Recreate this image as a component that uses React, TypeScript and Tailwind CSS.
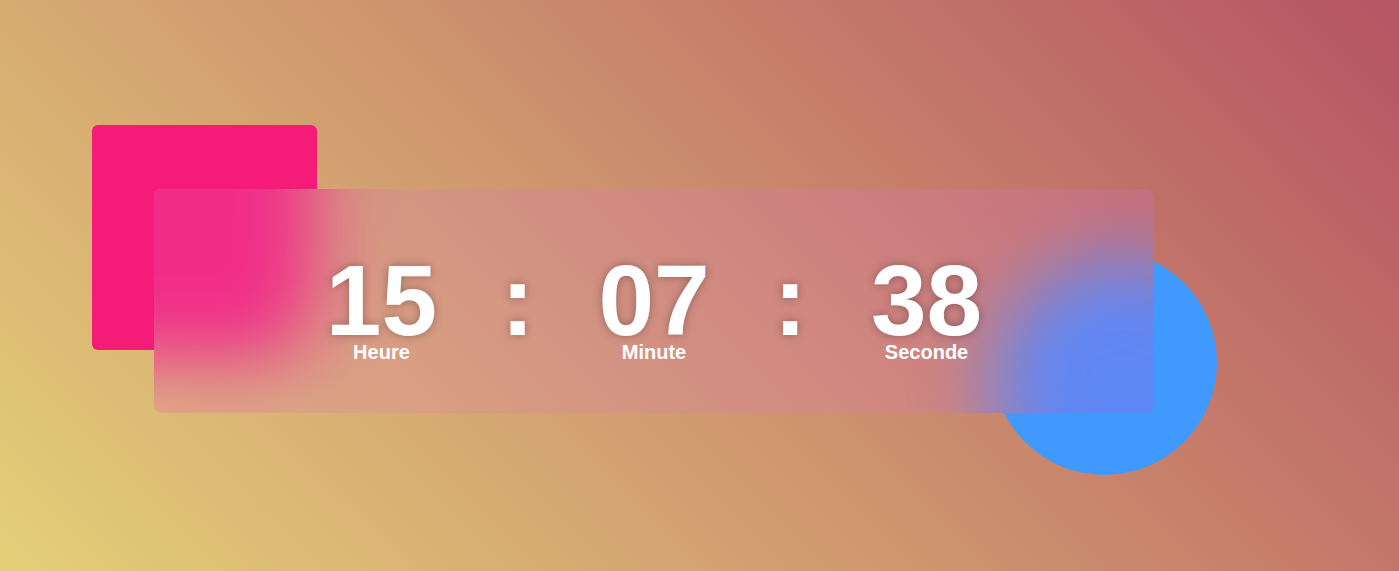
const units = [
  { value: "15", label: "Heure" },
  { value: "07", label: "Minute" },
  { value: "38", label: "Seconde" },
];

const bigText =
  "text-[100px] font-bold leading-[84px] [text-shadow:0_0_10px_rgba(0,0,0,0.3)]";

export default function App() {
  return (
    <div className="h-screen w-full overflow-hidden bg-[linear-gradient(45deg,#e4cf78,#b65464)] pl-[154px] pt-[189px] font-['Liberation_Sans',Arial,sans-serif] text-white">
      <div className="relative h-[224px] w-[1000px]">
        {/* decorative shapes behind the glass card */}
        <div className="absolute -left-[62px] -top-[64px] size-[225px] rounded-md bg-[#f51b78]" />
        <div className="absolute left-[838px] top-[61px] size-[225px] rounded-full bg-[#3f99ff]" />

        {/* frosted card: page gradient + blurred copies of the shapes */}
        <div className="relative h-full overflow-hidden rounded-lg bg-[linear-gradient(45deg,#e4cf78,#b65464)] bg-fixed">
          <div className="absolute -left-[120px] -top-[120px] h-[290px] w-[280px] rounded-[60px] bg-[#f51b78] blur-[38px]" />
          <div className="absolute left-[840px] top-[70px] size-[260px] rounded-full bg-[#3f8cff] blur-[38px]" />

          <div className="relative flex h-full items-start justify-center gap-16 bg-[#e372cc]/20 pt-[69px]">
            {units.map((u, i) => (
              <div key={u.label} className="flex items-start gap-16">
                {i > 0 && <span className={bigText}>:</span>}
                <div className="flex flex-col items-center">
                  <span className={bigText}>{u.value}</span>
                  <span className="text-[20px] font-bold leading-none">{u.label}</span>
                </div>
              </div>
            ))}
          </div>
        </div>
      </div>
    </div>
  );
}
